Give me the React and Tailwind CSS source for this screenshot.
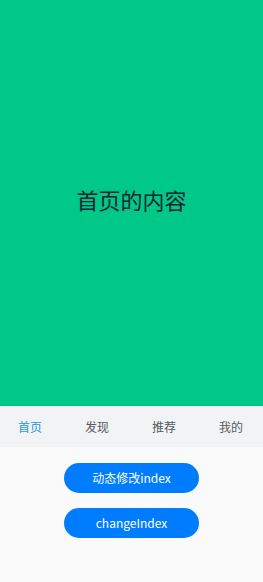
import React, { useState } from "react";

const tabs = ["首页", "发现", "推荐", "我的"];
const contents = ["首页的内容", "发现的内容", "推荐的内容", "我的内容"];

export default function App() {
  const [index, setIndex] = useState(0);

  return (
    <div
      className="w-[263px] h-[582px] flex flex-col bg-[#fafafa] overflow-hidden"
      style={{ fontFamily: '"Noto Sans CJK SC", "Noto Sans", sans-serif' }}
    >
      {/* Content */}
      <div className="h-[406px] bg-[#00c887] flex items-center justify-center pb-[8px]">
        <span className="text-[22px] leading-none text-[#182431]">{contents[index]}</span>
      </div>

      {/* Tab bar */}
      <div className="h-[41px] bg-[#f1f3f5] flex items-center justify-between pl-[18px] pr-[20px]">
        {tabs.map((t, i) => (
          <button
            key={t}
            onClick={() => setIndex(i)}
            className={`text-[12px] leading-none ${i === index ? "text-[#2598d6]" : "text-[#555a60]"}`}
          >
            {t}
          </button>
        ))}
      </div>

      {/* Buttons */}
      <div className="flex flex-col items-center gap-[15px] pt-[16px]">
        <button
          onClick={() => setIndex((index + 1) % 4)}
          className="w-[135px] h-[30px] rounded-full bg-[#007dff] text-white text-[12px] leading-none"
        >
          动态修改index
        </button>
        <button
          onClick={() => setIndex(0)}
          className="w-[135px] h-[30px] rounded-full bg-[#007dff] text-white text-[12px] leading-none"
        >
          changeIndex
        </button>
      </div>
    </div>
  );
}
